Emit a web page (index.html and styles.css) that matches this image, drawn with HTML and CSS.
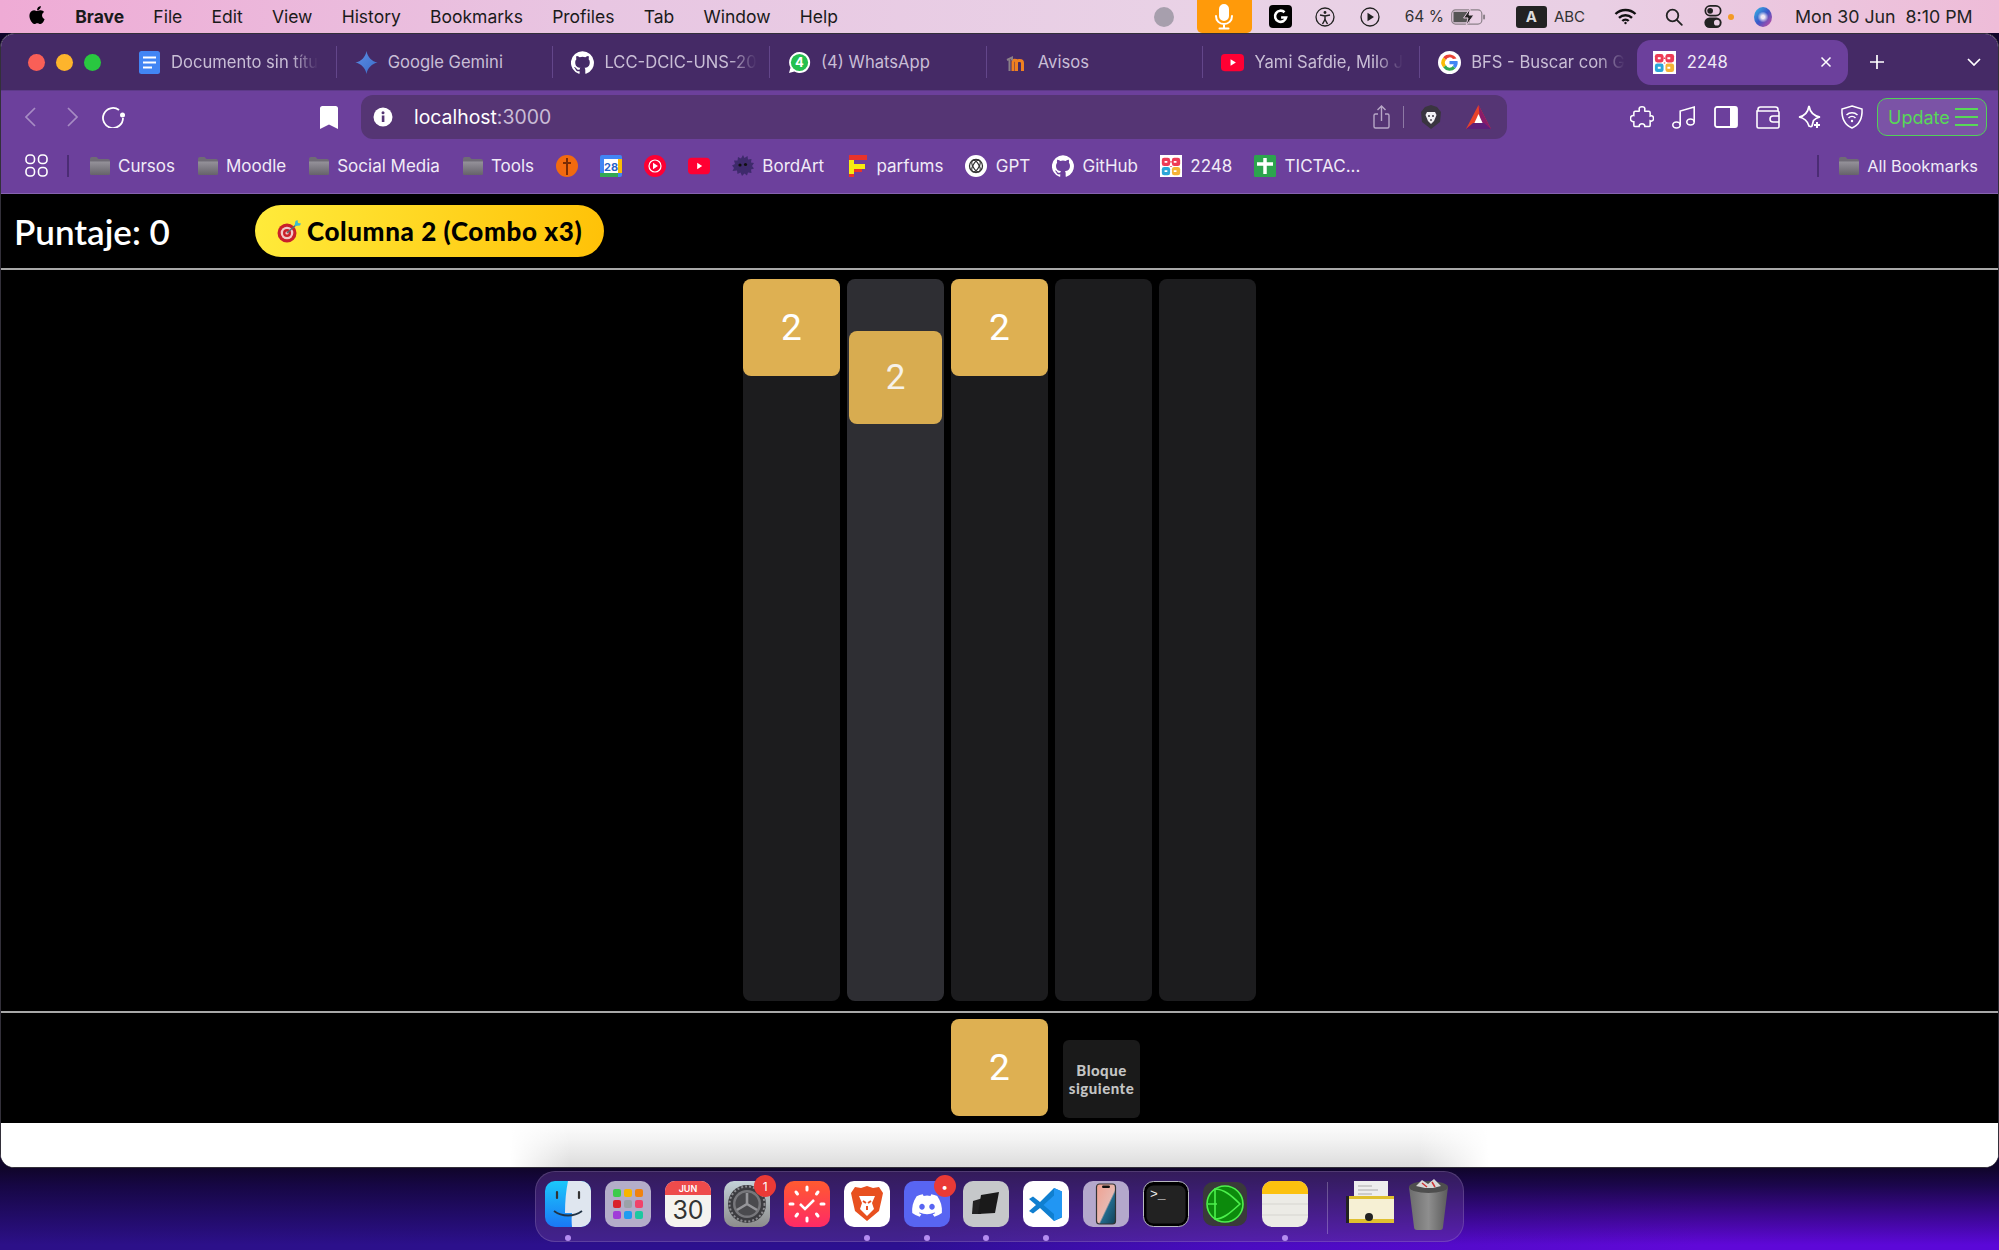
FILE: index.html
```html
<!DOCTYPE html>
<html lang="es">
<head>
<meta charset="utf-8">
<title>2248</title>
<link rel="stylesheet" href="styles.css">
</head>
<body>
<svg class="defs" width="0" height="0" aria-hidden="true">
  <defs>
    <linearGradient id="fold" x1="0" y1="0" x2="0" y2="1"><stop offset="0" stop-color="#95929a"/><stop offset="1" stop-color="#66636a"/></linearGradient>
    <symbol id="folder" viewBox="0 0 22 20"><path d="M1 3a2 2 0 0 1 2-2h4.500l2 2H19a2 2 0 0 1 2 2v12a2 2 0 0 1-2 2H3a2 2 0 0 1-2-2z" fill="#6f6b75"/><path d="M1 5.500h20V17a2 2 0 0 1-2 2H3a2 2 0 0 1-2-2z" fill="url(#fold)"/></symbol>
    <symbol id="github" viewBox="0 0 24 24"><path fill="#fff" d="M12 .3a12 12 0 0 0-3.800 23.400c.6.100.8-.3.8-.6v-2c-3.300.7-4-1.600-4-1.600-.6-1.400-1.400-1.800-1.400-1.800-1-.7.100-.7.100-.7 1.200.1 1.900 1.200 1.900 1.200 1 1.800 2.800 1.300 3.500 1 .1-.8.4-1.300.8-1.600-2.700-.3-5.500-1.300-5.500-5.900 0-1.300.5-2.400 1.200-3.200-.1-.3-.5-1.500.1-3.200 0 0 1-.3 3.300 1.200a11.500 11.500 0 0 1 6 0c2.300-1.500 3.300-1.200 3.300-1.200.6 1.700.2 2.900.1 3.200.8.800 1.200 1.900 1.200 3.200 0 4.600-2.800 5.600-5.500 5.900.4.400.8 1.100.8 2.200v3.300c0 .3.2.7.8.6A12 12 0 0 0 12 .3z"/></symbol>
    <symbol id="fav2248" viewBox="0 0 24 24"><rect width="24" height="24" fill="#fff"/><rect x="2" y="3" width="9" height="9" rx="2.500" fill="#ee3b55"/><rect x="13" y="3" width="9" height="9" rx="2.500" fill="#ee3b55"/><rect x="2" y="13" width="9" height="9" rx="2.500" fill="#2ba6d8"/><rect x="13" y="13" width="9" height="9" rx="2.500" fill="#f5b335"/><path d="M5 7.500h3M15 7.500h3M5 17.500h3M15 17.500h3" stroke="#fff" stroke-width="2"/><path d="M11 7.500h2M12 12v1" stroke="#ee3b55" stroke-width="1.500"/></symbol>
    <symbol id="yt" viewBox="0 0 24 24"><rect x="0" y="3" width="24" height="18" rx="4" fill="#ff0033"/><path d="M10 8.500l5.500 3.500-5.500 3.500z" fill="#fff"/></symbol>
  </defs>
</svg>

<header class="menubar">
  <nav class="menu-left">
    <svg class="apple" viewBox="0 0 24 24"><path d="M17.050 20.280c-.98.95-2.050.8-3.080.35-1.090-.46-2.090-.48-3.240 0-1.440.62-2.200.44-3.060-.35C2.790 15.250 3.510 7.590 9.050 7.310c1.350.07 2.290.74 3.080.8 1.180-.24 2.310-.93 3.570-.84 1.510.12 2.650.72 3.400 1.800-3.120 1.870-2.380 5.980.48 7.130-.57 1.500-1.310 2.990-2.540 4.090zM12.030 7.250c-.15-2.230 1.660-4.070 3.740-4.250.29 2.580-2.340 4.500-3.740 4.250z"/></svg>
    <span class="menu-app">Brave</span>
    <span>File</span><span>Edit</span><span>View</span><span>History</span><span>Bookmarks</span><span>Profiles</span><span>Tab</span><span>Window</span><span>Help</span>
  </nav>
  <div class="status">
    <span class="st-dot"></span>
    <span class="st-mic"><svg width="22" height="26" viewBox="0 0 22 26" fill="none" stroke="#fff" stroke-width="2" stroke-linecap="round"><rect x="7" y="1" width="8" height="15" rx="4" fill="#fff"/><path d="M3 12c0 5 3.500 8 8 8s8-3 8-8M11 20v4M6.500 24.500h9"/></svg></span>
    <svg class="st-g" viewBox="0 0 23 23"><rect width="23" height="23" rx="4" fill="#000"/><path d="M15.500 7.200a5.600 5.600 0 1 0 1.600 5.300h-5" fill="none" stroke="#fff" stroke-width="2.600"/></svg>
    <svg class="st-circ" viewBox="0 0 20 20" fill="none" stroke="#222" stroke-width="1.300"><circle cx="10" cy="10" r="9"/><circle cx="10" cy="5.500" r="1.400" fill="#222" stroke="none"/><path d="M5 8l5 1 5-1M10 9v3.500M10 12.500l-2.500 4.500M10 12.500l2.500 4.500" stroke-width="1.500"/></svg>
    <svg class="st-circ st-play" viewBox="0 0 20 20" fill="none" stroke="#222" stroke-width="1.300"><circle cx="10" cy="10" r="9"/><path d="M7.500 5.800l6.500 4.200-6.500 4.200z" fill="#222" stroke="none"/></svg>
    <span class="st-pct">64 %</span>
    <svg class="st-batt" viewBox="0 0 36 18"><rect x=".7" y="1.700" width="31" height="14.600" rx="4" fill="none" stroke="#8a8088" stroke-width="1.200"/><path d="M2.500 3.500h15l2 11h-17z" fill="#555"/><rect x="33" y="6.500" width="2" height="5" rx="1" fill="#8a8088"/><path d="M20 0l-7 10h4.500l-2 8 8-11h-5z" fill="#222" stroke="#e9cfe4" stroke-width="1"/></svg>
    <span class="st-a">A</span>
    <span class="st-abc">ABC</span>
    <svg class="st-wifi" viewBox="0 0 23 17" fill="none" stroke="#111" stroke-width="2.400"><path d="M1.500 6a14.500 14.500 0 0 1 20 0M5 9.800a9.500 9.500 0 0 1 13 0M8.300 13a4.500 4.500 0 0 1 6.400 0"/><circle cx="11.500" cy="15" r="1.200" fill="#111" stroke="none"/></svg>
    <svg class="st-search" viewBox="0 0 18 18" fill="none" stroke="#222" stroke-width="1.800"><circle cx="7.500" cy="7.500" r="5.800"/><path d="M11.800 11.800l5 5" stroke-linecap="round"/></svg>
    <svg class="st-ctrl" viewBox="0 0 18 24"><rect x="1" y="1" width="16" height="10" rx="5" fill="none" stroke="#222" stroke-width="1.800"/><circle cx="6" cy="6" r="3" fill="#222"/><rect y="13" width="18" height="11" rx="5.500" fill="#222"/><circle cx="13" cy="18.500" r="3" fill="#e9cfe4"/></svg>
    <span class="st-orange"></span>
    <svg class="st-siri" viewBox="0 0 20 20"><defs><linearGradient id="siri" x1="0" y1="0" x2="1" y2="1"><stop offset="0" stop-color="#35c0e8"/><stop offset=".5" stop-color="#3b56c8"/><stop offset="1" stop-color="#d84a9c"/></linearGradient><radialGradient id="siri2"><stop offset=".3" stop-color="#f0e8f4"/><stop offset="1" stop-color="#f0e8f4" stop-opacity="0"/></radialGradient></defs><ellipse cx="10" cy="10" rx="9" ry="10" fill="url(#siri)"/><circle cx="10" cy="10" r="5.500" fill="url(#siri2)"/></svg>
    <span class="st-date">Mon 30 Jun&nbsp; 8:10 PM</span>
  </div>
</header>

<main class="window">
  <div class="tabstrip">
    <div class="lights"><i class="red"></i><i class="yellow"></i><i class="green"></i></div>
    <div class="tab">
      <svg class="tab-ico" viewBox="0 0 23 23"><rect x="1" width="21" height="23" rx="2.500" fill="#4285f4"/><path d="M5 6.500h13M5 11.500h13M5 16.500h9" stroke="#fff" stroke-width="2"/></svg>
      <span class="tab-title">Documento sin títu</span>
    </div>
    <div class="tab">
      <svg class="tab-ico" viewBox="0 0 23 23"><defs><linearGradient id="gem" x1="0" y1="0" x2="1" y2="1"><stop offset="0" stop-color="#5b8ee6"/><stop offset="1" stop-color="#3b6cc8"/></linearGradient></defs><path d="M11.500 0c1 6 5.500 10.500 11 11.500-5.500 1-10 5.500-11 11.500-1-6-5.500-10.500-11-11.500C6 10.500 10.500 6 11.500 0z" fill="url(#gem)"/></svg>
      <span class="tab-plain">Google Gemini</span>
    </div>
    <div class="tab">
      <svg class="tab-ico"><use href="#github"/></svg>
      <span class="tab-title">LCC-DCIC-UNS-20</span>
    </div>
    <div class="tab">
      <svg class="tab-ico" viewBox="0 0 23 23"><path d="M11.500 1a10.500 10.500 0 0 0-9 15.800L1 22l5.400-1.400A10.500 10.500 0 1 0 11.500 1z" fill="#fff"/><circle cx="11.500" cy="11.500" r="8.600" fill="#25c04f"/><text x="11.500" y="16" class="svg-wa">4</text></svg>
      <span class="tab-plain">(4) WhatsApp</span>
    </div>
    <div class="tab">
      <svg class="tab-ico" viewBox="0 0 23 23" fill="none"><path d="M8 20v-9c0-2 3-2.500 3.500-.5V20M11.500 11c.5-2 6-2.500 6 1v8" stroke="#f08020" stroke-width="3"/><path d="M2 9l5-2.500v3M4.500 9v11" stroke="#8a8088" stroke-width="2"/></svg>
      <span class="tab-plain">Avisos</span>
    </div>
    <div class="tab">
      <svg class="tab-ico"><use href="#yt"/></svg>
      <span class="tab-title">Yami Safdie, Milo J</span>
    </div>
    <div class="tab tab-last">
      <svg class="tab-ico" viewBox="0 0 23 23"><circle cx="11.500" cy="11.500" r="11.500" fill="#fff"/><path d="M18.500 7.500a8 8 0 0 0-13.300-1L8 9a4 4 0 0 1 7-1z" fill="#ea4335"/><path d="M5.200 6.500a8 8 0 0 0 0 10L8 14.300a4 4 0 0 1 0-5.300z" fill="#fbbc05"/><path d="M5.200 16.500a8 8 0 0 0 12.300.7l-2.600-2.200A4 4 0 0 1 8 14.300z" fill="#34a853"/><path d="M19.500 10H11.500v3.300h4.200a4 4 0 0 1-.8 1.700l2.600 2.200a8 8 0 0 0 2-7.200z" fill="#4285f4"/></svg>
      <span class="tab-title">BFS - Buscar con G</span>
    </div>
    <div class="tab-active">
      <svg class="tab-ico"><use href="#fav2248"/></svg>
      <span class="tab-name">2248</span>
      <svg class="tab-close" viewBox="0 0 12 12" fill="none" stroke="#fff" stroke-width="1.500"><path d="M1.500 1.500l9 9M10.500 1.500l-9 9"/></svg>
    </div>
    <svg class="tab-plus" viewBox="0 0 16 16" fill="none" stroke="#fff" stroke-width="1.700"><path d="M8 1v14M1 8h14"/></svg>
    <svg class="tab-chev" viewBox="0 0 14 8" fill="none" stroke="#fff" stroke-width="1.700"><path d="M1 1l6 6 6-6"/></svg>
  </div>

  <div class="toolbar">
    <svg class="nav-back" viewBox="0 0 11 20" fill="none" stroke="#a78cc4" stroke-width="1.700"><path d="M10 1L1 10l9 9"/></svg>
    <svg class="nav-fwd" viewBox="0 0 11 20" fill="none" stroke="#a78cc4" stroke-width="1.700"><path d="M1 1l9 9-9 9"/></svg>
    <svg class="nav-reload" viewBox="0 0 24 22" fill="none" stroke="#fff" stroke-width="1.800"><path d="M21 12a10 10 0 1 1-4-8"/><circle cx="20.500" cy="9" r="2.500" fill="#fff" stroke="none"/></svg>
    <svg class="nav-mark" viewBox="0 0 18 23"><path d="M0 2.500A2.500 2.500 0 0 1 2.500 0h13A2.500 2.500 0 0 1 18 2.500V23l-9-4.500L0 23z" fill="#fff"/></svg>
    <div class="address">
      <svg class="addr-info" viewBox="0 0 20 20"><circle cx="10" cy="10" r="9.500" fill="#fff"/><rect x="8.800" y="8.500" width="2.600" height="6.500" fill="#553574"/><circle cx="10" cy="5.800" r="1.500" fill="#553574"/></svg>
      <span class="addr-text"><b>localhost</b>:3000</span>
      <svg class="addr-share" viewBox="0 0 17 24" fill="none" stroke="#b7a7c6" stroke-width="1.400"><path d="M5 9H2.500A1.500 1.500 0 0 0 1 10.500v11A1.500 1.500 0 0 0 2.500 23h12a1.500 1.500 0 0 0 1.500-1.500v-11A1.500 1.500 0 0 0 14.500 9H12M8.500 16V1M4.500 5l4-4 4 4"/></svg>
      <span class="addr-sep"></span>
      <svg class="addr-lion" viewBox="0 0 20 24"><path d="M10 0l6 2 4 5-1 10-9 7-9-7L0 7l4-5z" fill="#3a3540"/><path d="M6 7h8l1.500 3-2.500 6-3 3-3-3-2.500-6z" fill="#f2f0f4"/><path d="M7 11h2M11 11h2M10 14v2" stroke="#3a3540" stroke-width="1.300"/></svg>
      <svg class="addr-tri" viewBox="0 0 25 24"><path d="M12.500 0L0 24h25z" fill="#e8422a"/><path d="M12.500 0L25 24h-10z" fill="#8a1c6a"/><path d="M12.500 9l-5 11h10z" fill="#fff"/><path d="M0 24l7-6h11l7 6z" fill="#5d1f7a"/></svg>
    </div>
    <div class="tools">
      <svg class="tool" viewBox="0 0 24 24" fill="none" stroke="#fff" stroke-width="1.600"><path d="M9 3.500c0-3 6-3 6 0 0 1-.5 1.500 0 2.500h4c1 0 1.500.5 1.500 1.500v3.500c1-.5 3.500-.5 3.500 2.500s-2.500 3-3.500 2.500v4.500c0 1-.5 1.500-1.500 1.500h-4c0-2-.5-3-3-3s-3 1-3 3H5c-1 0-1.500-.5-1.500-1.500V17C1 17 0 15.500 0 13.500S1.500 10 3.500 10.500V7.500C3.500 6.500 4 6 5 6h4c.5-1 0-1.500 0-2.500z" transform="scale(.96) translate(.5 .5)"/></svg>
      <svg class="tool" viewBox="0 0 24 24" fill="none" stroke="#fff" stroke-width="1.600"><ellipse cx="4.500" cy="20" rx="3.700" ry="3"/><ellipse cx="18.500" cy="17" rx="3.700" ry="3"/><path d="M8.200 20V6L22.200 2v15"/></svg>
      <svg class="tool" viewBox="0 0 24 24"><rect x="1" y="2" width="22" height="20" rx="2" fill="none" stroke="#fff" stroke-width="1.800"/><rect x="16" y="2" width="7" height="20" fill="#fff"/></svg>
      <svg class="tool" viewBox="0 0 24 24" fill="none" stroke="#fff" stroke-width="1.600"><path d="M2 6V4.500A2.500 2.500 0 0 1 4.500 2h15A2.500 2.500 0 0 1 22 4.500V6M1 6h20.500A1.500 1.500 0 0 1 23 7.500v14a1.500 1.500 0 0 1-1.500 1.500h-19A1.500 1.500 0 0 1 1 21.500z"/><path d="M23 11h-6a2.500 2.500 0 0 0 0 6h6"/></svg>
      <svg class="tool" viewBox="0 0 24 24" fill="none" stroke="#fff" stroke-width="1.700"><path d="M11 1c1 6 5 10 11 11-3 .7-5 1.800-6.500 3.500L14 21c-1.200 1.500-1.800.5-3 0-1.500-5-4.500-8-10-9C7 11 10 7 11 1z"/><path d="M19 17v6M16 20h6" stroke-width="2"/></svg>
      <svg class="tool" viewBox="0 0 24 24" fill="none" stroke="#fff" stroke-width="1.500"><path d="M12 1l10 3c.5 8-1 15-10 19C3 19 1.500 12 2 4z"/><path d="M6.500 10a8 8 0 0 1 11 0M8.500 13a5 5 0 0 1 7 0"/><circle cx="12" cy="16" r="1.200" fill="#fff" stroke="none"/></svg>
      <div class="update">Update<span class="burger"><i></i><i></i><i></i></span></div>
    </div>
  </div>

  <div class="bookmarks">
    <svg class="apps" viewBox="0 0 23 23" fill="none" stroke="#fff" stroke-width="1.600"><rect x="1" y="1" width="8.500" height="8.500" rx="3.500"/><rect x="13.500" y="1" width="8.500" height="8.500" rx="3.500"/><rect x="1" y="13.500" width="8.500" height="8.500" rx="3.500"/><rect x="13.500" y="13.500" width="8.500" height="8.500" rx="3.500"/></svg>
    <span class="bm-sep"></span>
    <span class="bm"><svg class="bm-ico"><use href="#folder"/></svg>Cursos</span>
    <span class="bm"><svg class="bm-ico"><use href="#folder"/></svg>Moodle</span>
    <span class="bm"><svg class="bm-ico"><use href="#folder"/></svg>Social Media</span>
    <span class="bm"><svg class="bm-ico"><use href="#folder"/></svg>Tools</span>
    <svg class="bm-ico" viewBox="0 0 22 22"><circle cx="11" cy="11" r="11" fill="#f26a0f"/><path d="M11 3v17M7 8h8" stroke="#7a2c05" stroke-width="2"/></svg>
    <svg class="bm-ico" viewBox="0 0 22 22"><rect width="22" height="22" rx="2" fill="#4285f4"/><rect x="4" y="4" width="14" height="14" fill="#fff"/><rect x="18" y="4" width="4" height="14" fill="#fbbc05"/><rect y="18" width="18" height="4" fill="#34a853"/><text x="11" y="16" class="svg-cal">28</text></svg>
    <svg class="bm-ico" viewBox="0 0 22 22"><circle cx="11" cy="11" r="11" fill="#ff0033"/><circle cx="11" cy="11" r="6" fill="none" stroke="#fff" stroke-width="1.200"/><path d="M9 7.800l5 3.200-5 3.200z" fill="#fff"/></svg>
    <svg class="bm-ico"><use href="#yt"/></svg>
    <span class="bm bm-site"><svg class="bm-ico" viewBox="0 0 22 22"><path d="M11 0l1.500 3 3-2 .5 3.500 3.500-.5-.5 3.500 3 .5-2 3 2 2.500-3 1 .5 3.500-3.500-.5-1 3-2.500-2-2.500 2.500-1.500-3.500-3 1.500-.5-3.500L.5 16 2 13 0 10.500l3-1.500-1-3.500h3.500L6 2l3 1.500z" fill="#3e2a6c"/><circle cx="8" cy="10" r="1.600" fill="#111"/><circle cx="13.500" cy="9.500" r="1.600" fill="#111"/></svg>BordArt</span>
    <span class="bm bm-site"><svg class="bm-ico" viewBox="0 0 22 22"><path d="M3 0h18v5H3z" fill="#e8332a"/><path d="M3 5h5v17H3z" fill="#f6ec10"/><path d="M8 9h11v5H8z" fill="#f6ec10"/><path d="M8 14h8v3H8z" fill="#e8332a"/><path d="M3 19h5v3H3z" fill="#e8332a"/></svg>parfums</span>
    <span class="bm bm-site"><svg class="bm-ico" viewBox="0 0 22 22"><circle cx="11" cy="11" r="11" fill="#fff"/><g fill="none" stroke="#333" stroke-width="1.300"><circle cx="11" cy="11" r="6.500"/><ellipse cx="11" cy="11" rx="6.500" ry="3" transform="rotate(60 11 11)"/><ellipse cx="11" cy="11" rx="6.500" ry="3" transform="rotate(-60 11 11)"/></g></svg>GPT</span>
    <span class="bm bm-site"><svg class="bm-ico"><use href="#github"/></svg>GitHub</span>
    <span class="bm bm-site"><svg class="bm-ico"><use href="#fav2248"/></svg>2248</span>
    <span class="bm bm-site"><svg class="bm-ico" viewBox="0 0 22 22"><rect width="22" height="22" rx="1.500" fill="#2da44e"/><path d="M11 3v16M3 9h16" stroke="#fff" stroke-width="3.500"/></svg>TICTAC...</span>
    <span class="bm-all"><span class="bm-sep"></span><span class="bm"><svg class="bm-ico"><use href="#folder"/></svg>All Bookmarks</span></span>
  </div>

  <section class="game">
    <div class="game-head">
      <div class="score">Puntaje: 0</div>
      <div class="hint">
        <svg class="dart" viewBox="0 0 24 24"><circle cx="10" cy="14" r="9.500" fill="#c9202a"/><circle cx="10" cy="14" r="6.300" fill="#f0c8c8"/><circle cx="10" cy="14" r="4" fill="#c9202a"/><circle cx="10" cy="14" r="1.600" fill="#f0c8c8"/><path d="M10 14L20 5" stroke="#5a6a72" stroke-width="1.500"/><path d="M17.500 7l1-5 2-1 .5 3 3 .5-1 2z" fill="#3cbcd0"/></svg>
        <span>Columna 2 (Combo x3)</span>
      </div>
    </div>
    <div class="board">
      <div class="col"><div class="block">2</div></div>
      <div class="col col-hover"><div class="block block-drop">2</div></div>
      <div class="col"><div class="block">2</div></div>
      <div class="col"></div>
      <div class="col"></div>
    </div>
    <div class="game-foot">
      <div class="block">2</div>
      <div class="next">Bloque siguiente</div>
    </div>
  </section>
  <div class="page-rest"></div>
</main>

<footer class="dock">
  <div class="dock-item on">
    <svg viewBox="0 0 46 46"><defs><linearGradient id="fi" x1="0" y1="0" x2="0" y2="1"><stop offset="0" stop-color="#1bc8fb"/><stop offset="1" stop-color="#1a78f5"/></linearGradient></defs><rect width="46" height="46" rx="10" fill="url(#fi)"/><path d="M23 0h13a10 10 0 0 1 10 10v26a10 10 0 0 1-10 10H27c-.5-5-.5-9 0-14h-7c0-12 1-22 3-32z" fill="#dfe6ef"/><path d="M12 11v6M34 11v6" stroke="#333" stroke-width="2.200" stroke-linecap="round"/><path d="M9 30c8 6 20 6 28 0" fill="none" stroke="#234" stroke-width="1.800"/></svg>
  </div>
  <div class="dock-item">
    <svg viewBox="0 0 46 46"><rect width="46" height="46" rx="10" fill="#b4adc9"/><rect x="8" y="8" width="8" height="8" rx="2" fill="#3ccb4a"/><rect x="19" y="8" width="8" height="8" rx="2" fill="#f8b500"/><rect x="30" y="8" width="8" height="8" rx="2" fill="#f0820f"/><rect x="8" y="19" width="8" height="8" rx="2" fill="#d9202a"/><rect x="19" y="19" width="8" height="8" rx="2" fill="#9aa2a8"/><rect x="30" y="19" width="8" height="8" rx="2" fill="#f0436a"/><rect x="8" y="30" width="8" height="8" rx="2" fill="#a03cd8"/><rect x="19" y="30" width="8" height="8" rx="2" fill="#1e9cf0"/><rect x="30" y="30" width="8" height="8" rx="2" fill="#1cc8a0"/></svg>
  </div>
  <div class="dock-item">
    <svg viewBox="0 0 46 46"><rect width="46" height="46" rx="10" fill="#f5f3ef"/><path d="M0 14V10A10 10 0 0 1 10 0h26a10 10 0 0 1 10 10v4z" fill="#ee4b4b"/><text x="23" y="11" class="svg-jun">JUN</text><text x="23" y="38" class="svg-thirty">30</text></svg>
  </div>
  <div class="dock-item">
    <svg viewBox="0 0 46 46"><defs><linearGradient id="se" x1="0" y1="0" x2="0" y2="1"><stop offset="0" stop-color="#c4d2d8"/><stop offset="1" stop-color="#8c8c8c"/></linearGradient></defs><rect width="46" height="46" rx="10" fill="url(#se)"/><circle cx="23" cy="23" r="19" fill="#3c3c40"/><circle cx="23" cy="23" r="17.500" fill="none" stroke="#8c8c90" stroke-width="2" stroke-dasharray="2 2"/><circle cx="23" cy="23" r="14" fill="#77777b"/><circle cx="23" cy="23" r="11.500" fill="#4a4a4e"/><path d="M23 23V12M23 23l10 6M23 23l-10 6" stroke="#96969a" stroke-width="2.600"/></svg>
    <span class="badge">1</span>
  </div>
  <div class="dock-item">
    <svg viewBox="0 0 46 46"><defs><linearGradient id="cl" x1="0" y1="0" x2="0" y2="1"><stop offset="0" stop-color="#ff5a30"/><stop offset="1" stop-color="#ff2a66"/></linearGradient></defs><rect width="46" height="46" rx="10" fill="url(#cl)"/><g stroke="#fff" stroke-width="3" stroke-linecap="round"><path d="M23 6v3M23 37v3M6 23h3M37 23h3M12 11l1.500 2M34 11l-1.500 2M12 35l1.500-2M34 35l-1.500-2"/></g><path d="M16 23l5 5 9-9" fill="none" stroke="#fff" stroke-width="2.500"/></svg>
  </div>
  <div class="dock-item on">
    <svg viewBox="0 0 46 46"><rect width="46" height="46" rx="10" fill="#fff"/><path d="M23 5l6 2 6-1 4 6-1.500 7L35 30l-12 10-12-10-2.500-11L7 12l4-6 6 1z" fill="#e8501f"/><path d="M15 15h16l-3 7 2 6-7 7-7-7 2-6z" fill="#fff"/><path d="M19 20l3 2M27 20l-3 2M23 25v4" stroke="#e8501f" stroke-width="2"/></svg>
  </div>
  <div class="dock-item on">
    <svg viewBox="0 0 46 46"><rect width="46" height="46" rx="10" fill="#5865f2"/><path transform="translate(8 9.500) scale(1.250)" fill="#fff" d="M20.300 4.400A19.800 19.800 0 0 0 15.400 3l-.6 1.300a18.300 18.300 0 0 0-5.500 0L8.600 3a19.700 19.700 0 0 0-4.900 1.500C.6 9.100-.3 13.600.2 18a19.900 19.900 0 0 0 6 3l1.300-2a13 13 0 0 1-2-1l.5-.4a14.200 14.200 0 0 0 12.100 0l.5.4c-.6.4-1.300.7-2 1l1.300 2a19.900 19.900 0 0 0 6-3c.5-5.100-.9-9.500-3.700-13.600zM8 15.300c-1.200 0-2.200-1.100-2.200-2.400S6.800 10.500 8 10.500s2.200 1.100 2.200 2.400S9.200 15.300 8 15.300zm8 0c-1.200 0-2.200-1.100-2.200-2.400s1-2.400 2.200-2.400 2.200 1.100 2.200 2.400-1 2.400-2.200 2.400z"/></svg>
    <span class="badge">•</span>
  </div>
  <div class="dock-item on">
    <svg viewBox="0 0 46 46"><rect width="46" height="46" rx="10" fill="#c6c8ca"/><path d="M10 20l10-3-2 16h-9z" fill="#222"/><path d="M18 14l18-3-4 21-17 1z" fill="#1a1a1a"/></svg>
  </div>
  <div class="dock-item on">
    <svg viewBox="0 0 46 46"><rect width="46" height="46" rx="10" fill="#fff"/><path d="M31 7L17 21l-7-5.500L6 18l7 6-7 6 4 2.500 7-5.500 14 13 8-3.500V10.500z" fill="#0f7fd0"/><path d="M31 7l8 3.500v25L31 40V14.500L20.500 24 31 33z" fill="#2196f3"/></svg>
  </div>
  <div class="dock-item">
    <svg viewBox="0 0 46 46"><defs><linearGradient id="ip" x1="0" y1="0" x2="1" y2="1"><stop offset="0" stop-color="#f0a090"/><stop offset=".55" stop-color="#e8b8b0"/><stop offset=".6" stop-color="#226a8c"/><stop offset="1" stop-color="#124058"/></linearGradient></defs><rect width="46" height="46" rx="10" fill="#b4a8cc"/><rect x="13.500" y="3" width="19" height="40" rx="3" fill="url(#ip)" stroke="#333" stroke-width="1.200"/><rect x="19" y="4.500" width="8" height="2.500" rx="1.200" fill="#111"/></svg>
  </div>
  <div class="dock-item">
    <svg viewBox="0 0 46 46"><rect x=".5" y=".5" width="45" height="45" rx="10" fill="#000" stroke="#b8b8c0"/><rect x="3.500" y="4.500" width="39" height="38" rx="7" fill="#222"/><text x="7" y="17" class="svg-term">&gt;_</text></svg>
  </div>
  <div class="dock-item">
    <svg viewBox="0 0 46 46"><rect x="1" y="1" width="44" height="44" rx="10" fill="#3a3a3a"/><circle cx="23" cy="23" r="18" fill="#0c8a0c" stroke="#4cf04c" stroke-width="1.600"/><path d="M13 8v30c8 0 14-5 25-15C30 15 22 8 13 8zM6 23h9" fill="none" stroke="#4cf04c" stroke-width="1.600"/></svg>
  </div>
  <div class="dock-item on">
    <svg viewBox="0 0 46 46"><rect width="46" height="46" rx="10" fill="#ecebe6"/><path d="M0 13V10A10 10 0 0 1 10 0h26a10 10 0 0 1 10 10v3z" fill="#fcc10f"/><path d="M0 23h46M0 34h46" stroke="#d6d5d0"/></svg>
  </div>
  <span class="dock-sep"></span>
  <div class="dock-print">
    <svg viewBox="0 0 48 46"><rect x="8" y="0" width="34" height="24" fill="#eeeeee"/><path d="M12 5h14M12 9h20M12 13h14" stroke="#aaa"/><rect x="0" y="15" width="48" height="27" fill="#f6f0d4"/><rect x="0" y="15" width="3" height="27" fill="#222"/><rect x="3" y="15" width="45" height="3" fill="#e0c030"/><rect x="3" y="38" width="45" height="4" fill="#e0c030"/><circle cx="23" cy="36" r="4" fill="#222"/></svg>
  </div>
  <div class="dock-trash">
    <svg viewBox="0 0 41 52"><defs><linearGradient id="tr" x1="0" y1="0" x2="1" y2="0"><stop offset="0" stop-color="#6c6c6c"/><stop offset=".5" stop-color="#8e8e8e"/><stop offset="1" stop-color="#5a5a5a"/></linearGradient></defs><path d="M1 9h39l-5 40a3 3 0 0 1-3 3H9a3 3 0 0 1-3-3z" fill="url(#tr)"/><ellipse cx="20.500" cy="9" rx="19.500" ry="6" fill="#4e4e4e"/><path d="M8 8l6-6 6 4 6-5 7 7-8 2-8 0z" fill="#d8d8d8"/><path d="M14 5l5 4M24 4l3 5" stroke="#c33" stroke-width="1.500"/></svg>
  </div>
</footer>
</body>
</html>
```

FILE: styles.css
```css
* { box-sizing: border-box; }
html, body { margin: 0; height: 100%; }
body {
  width: 1999px;
  height: 1250px;
  overflow: hidden;
  font-family: Inter, "Liberation Sans", sans-serif;
  background:
    linear-gradient(180deg, #10052a 1168px, rgba(20,6,60,.9) 1185px, rgba(30,10,110,0) 1245px),
    linear-gradient(90deg, #2c1088 0, #2c1090 45%, #4a0cc0 62%, #6008d8 85%, #5a08d8 100%);
}
.defs { position: absolute; }
svg { display: block; flex: none; }

/* macOS menu bar */
.menubar {
  height: 33px;
  display: flex;
  justify-content: space-between;
  background: linear-gradient(90deg, #efabd5 0, #e8c6e2 30%, #e9d2e6 60%, #e9cfe4 80%, #eebcd8 100%);
  color: #1a1a1a;
  font-size: 17.500px;
}
.menu-left { display: flex; align-items: center; gap: 29.200px; padding-left: 25px; }
.apple { width: 24px; height: 26px; margin-right: -3px; margin-top: -3px; fill: #000; }
.menu-app { font-weight: 700; }
.status { display: flex; align-items: center; padding-right: 25px; }
.st-dot { width: 20px; height: 20px; border-radius: 50%; background: #a79fad; margin-right: 23px; }
.st-mic { width: 55px; height: 33px; background: #ff9a0a; border-radius: 0 0 5px 5px; display: flex; align-items: center; justify-content: center; margin-right: 17px; }
.st-g { width: 23px; height: 23px; margin-right: 23px; }
.st-circ { width: 20px; height: 20px; margin-right: 25px; }
.st-pct { margin-right: 7px; font-size: 15.500px; color: #333; }
.st-batt { width: 35px; height: 18px; margin-right: 30px; }
.st-a { width: 31px; height: 22px; background: #222; color: #ddd; border-radius: 3px; font-size: 15px; font-weight: 700; display: flex; align-items: center; justify-content: center; margin-right: 7px; }
.st-abc { font-size: 15px; margin-right: 29px; color: #333; }
.st-wifi { width: 23px; height: 17px; margin-right: 28px; }
.st-search { width: 18px; height: 18px; margin-right: 21px; }
.st-ctrl { width: 18px; height: 23px; margin-right: 6px; }
.st-orange { width: 6px; height: 6px; border-radius: 50%; background: #f39a26; margin-right: 19px; }
.st-siri { width: 20px; height: 20px; margin-right: 22px; }
.st-date { font-size: 17.800px; white-space: pre; width: 179px; color: #222; }

/* browser window */
.window {
  height: 1135px;
  border: 1px solid #33303a;
  border-radius: 14px;
  overflow: hidden;
  display: flex;
  flex-direction: column;
  background: #fff;
}
.tabstrip { height: 56px; flex: none; background: #452a66; display: flex; align-items: center; padding-left: 27px; }
.lights { display: flex; gap: 11px; margin-right: 18px; width: 74px; }
.lights i { width: 17px; height: 17px; border-radius: 50%; }
.red { background: #f95f57; }
.yellow { background: #fdb42c; }
.green { background: #29c740; }
.tab { width: 216.700px; height: 32px; display: flex; align-items: center; gap: 10px; padding: 0 4px 0 18px; border-right: 1px solid #63468a; color: #c9bed6; font-size: 16.600px; white-space: nowrap; }
.tab-last { border-right: 0; }
.tab-ico { width: 23px; height: 23px; flex: none; }
.tab-title { -webkit-mask-image: linear-gradient(90deg, #000 82%, transparent); mask-image: linear-gradient(90deg, #000 82%, transparent); }
.tab-active { width: 211px; height: 45px; background: #6c409c; border-radius: 14px; display: flex; align-items: center; gap: 11px; padding: 0 16px 0 16px; color: #f1ebf7; font-size: 16.600px; }
.tab-name { flex: 1; }
.tab-close { width: 12px; height: 12px; }
.tab-plus { width: 16px; height: 16px; margin-left: 21px; }
.tab-chev { width: 14px; height: 8px; margin-left: 82px; }
.svg-wa { font: 700 13px Inter, sans-serif; fill: #fff; text-anchor: middle; }
.svg-cal { font: 700 11px Inter, sans-serif; fill: #2a62c8; text-anchor: middle; }
.svg-jun { font: 600 9px Inter, sans-serif; fill: #fff; text-anchor: middle; }
.svg-thirty { font: 400 25px Inter, sans-serif; fill: #333; text-anchor: middle; }
.svg-term { font: 400 13px "Liberation Mono", monospace; fill: #eee; }

.toolbar { height: 53px; flex: none; background: #6c409c; border-top: 1px solid #5d3a88; display: flex; align-items: center; padding-left: 24px; }
.nav-back, .nav-fwd { width: 11px; height: 20px; }
.nav-fwd { margin-left: 31px; }
.nav-reload { width: 24px; height: 22px; margin-left: 24px; }
.nav-mark { width: 18px; height: 23px; margin-left: 194px; }
.address { width: 1146px; height: 44px; margin-left: 23px; background: #553574; border-radius: 12px; display: flex; align-items: center; padding: 0 16px 0 12px; color: #c9bcd6; font-size: 19.400px; }
.addr-info { width: 20px; height: 20px; margin-right: 21px; }
.addr-text { flex: 1; }
.addr-text b { font-weight: 400; color: #fff; }
.addr-share { width: 17px; height: 24px; }
.addr-sep { width: 1px; height: 22px; background: #8d79a4; margin: 0 17px 0 13px; }
.addr-lion { width: 20px; height: 24px; margin-right: 25px; }
.addr-tri { width: 25px; height: 24px; }
.tools { display: flex; align-items: center; gap: 18px; margin-left: 123px; }
.tool { width: 24px; height: 24px; }
.update { width: 110px; height: 38px; margin-left: -5px; border: 1.500px solid #52d058; border-radius: 10px; background: rgba(255,255,255,.1); color: #58d858; font-size: 18px; display: flex; align-items: center; justify-content: space-between; padding: 0 8px 0 10px; }
.burger { width: 23px; display: flex; flex-direction: column; gap: 6.500px; }
.burger i { display: block; height: 1.500px; background: #58d858; }

.bookmarks { height: 51px; flex: none; background: #6c409c; border-bottom: 1px solid #8663b0; display: flex; align-items: center; gap: 22px; padding: 0 20px 5px 24px; color: #f1ebf7; font-size: 17px; }
.apps { width: 23px; height: 23px; margin-right: -3px; }
.bm-sep { width: 2px; height: 22px; background: #4b2c74; margin-right: -2px; }
.bm { display: flex; align-items: center; gap: 7px; white-space: nowrap; }
.bm-site { gap: 8.300px; }
.bm-ico { width: 22px; height: 22px; flex: none; }
.bm-all { margin-left: auto; display: flex; align-items: center; gap: 21px; font-size: 16.400px; }

/* game */
.game { background: #000; flex: none; display: flex; flex-direction: column; color: #fff; }
.game-head { height: 76px; border-bottom: 2px solid #a8a8a8; display: flex; align-items: center; padding-left: 13px; }
.score { width: 241px; font-family: Lato, sans-serif; font-size: 35px; font-weight: 600; white-space: nowrap; }
.hint { width: 349px; height: 52px; border-radius: 26px; background: linear-gradient(100deg, #ffeb3b, #ffc107); color: #000; display: flex; align-items: center; gap: 6px; padding-left: 22px; font-family: Lato, sans-serif; font-weight: 900; font-size: 26px; letter-spacing: .6px; white-space: nowrap; }
.dart { width: 24px; height: 24px; }
.board { display: flex; justify-content: center; gap: 7px; padding: 9px 0 10px; }
.col { width: 97px; height: 722px; background: #1c1c1e; border-radius: 8px; }
.col-hover { background: #2e2e33; display: flex; justify-content: center; padding-top: 52px; }
.block { width: 97px; height: 97px; border-radius: 8px; background: #deb052; color: #fff; display: flex; align-items: center; justify-content: center; font-family: Roboto, sans-serif; font-size: 37px; }
.block-drop { width: 93px; height: 93px; background: #d8ac50; font-size: 35px; color: #f6f2ea; }
.game-foot { height: 112px; border-top: 2px solid #a8a8a8; display: grid; grid-template-columns: 1fr 97px 1fr; padding-top: 6px; }
.game-foot .block { grid-column: 2; }
.next { grid-column: 3; width: 77px; height: 78px; margin: 21px 0 0 15px; background: #1a1a1a; border-radius: 6px; color: #c4c4c4; font-family: Lato, sans-serif; font-weight: 900; font-size: 15px; letter-spacing: .5px; line-height: 18px; text-align: center; display: flex; align-items: center; justify-content: center; }
.page-rest { flex: 1; background: linear-gradient(90deg, #fff 25.500%, transparent 28.500%, transparent 71%, #fff 74.500%), linear-gradient(180deg, #fdfdfd, #f2f2f2 40%, #dcdcdc); }

/* dock */
.dock { width: 929px; height: 71px; margin: 3px auto 0; border: 1px solid rgba(255,255,255,.14); border-radius: 20px; background: rgba(100,60,150,.42); display: flex; align-items: flex-start; gap: 13.750px; padding: 9px 0 0 9px; }
.dock-item { position: relative; width: 46px; height: 46px; }
.dock-item svg { width: 46px; height: 46px; }
.dock-item.on::after { content: ""; position: absolute; left: 20px; top: 54px; width: 6px; height: 6px; border-radius: 50%; background: #b48cf0; }
.badge { position: absolute; left: 30px; top: -6px; width: 22px; height: 22px; border-radius: 50%; background: #ea3a36; color: #fff; font-size: 12px; display: flex; align-items: center; justify-content: center; }
.dock-sep { width: 1px; height: 52px; background: rgba(255,255,255,.25); margin: 1px 5px 0 5px; }
.dock-print { width: 48px; height: 46px; margin-left: -1px; }
.dock-print svg { width: 48px; height: 46px; }
.dock-trash { width: 41px; height: 52px; margin: -3px 0 0 1px; }
.dock-trash svg { width: 41px; height: 52px; }
```
